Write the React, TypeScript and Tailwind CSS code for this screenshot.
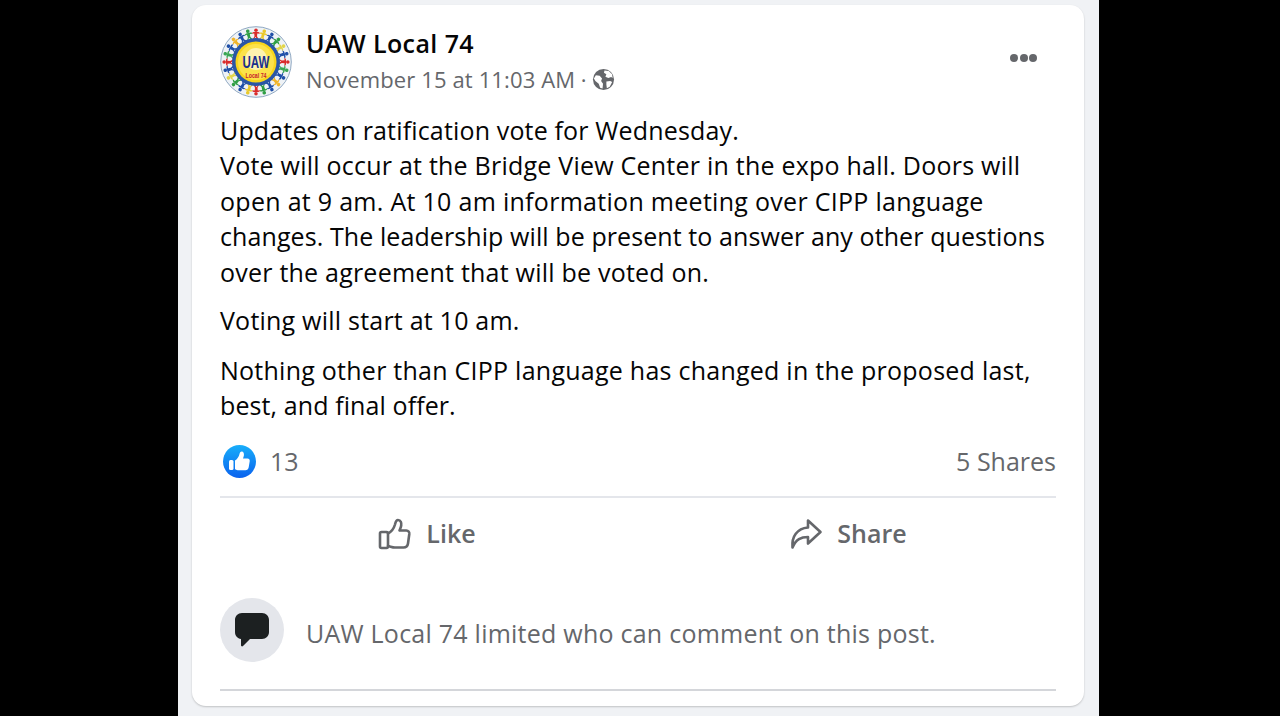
const FONT = "font-['Open_Sans','Noto_Sans',sans-serif]";

function Logo() {
  const colors = ['#d92b2b', '#e9c92a', '#1f4fa8', '#2f9e44', '#e2d54a', '#1f4fa8', '#d92b2b', '#3aa655', '#1f4fa8', '#f0b429', '#1f4fa8', '#2f9e44'];
  const figures = Array.from({ length: 24 }, (_, i) => (i * 360) / 24);
  return (
    <svg viewBox="0 0 72 72" className="w-[72px] h-[72px] shrink-0">
      <circle cx="36" cy="36" r="35.300" fill="#eef2f6" stroke="#8fa8c2" strokeWidth="1" />
      {figures.map((a, i) => (
        <g key={a} transform={`rotate(${a} 36 36)`} fill={colors[i % colors.length]}>
          <circle cx="36" cy="4.200" r="1.800" />
          <path d="M32.500 6.500 33.800 6h4.400l1.300.5.2 1.200-2.400-.3-.3 2.800 1.500 2.800h-1.700l-1.300-2.200-1.300 2.200H33l1.500-2.800-.3-2.800-2.400.3z" />
        </g>
      ))}
      <circle cx="36" cy="36" r="24" fill="#2a56a6" />
      <circle cx="36" cy="36" r="20.500" fill="#f7d51d" />
      <circle cx="36" cy="36" r="18" fill="#fbe24a" />
      <circle cx="36" cy="33" r="11" fill="#fdf3b0" />
      <text x="36" y="42" textAnchor="middle" fontFamily="'Liberation Sans',sans-serif" fontWeight="700" fontSize="17" textLength="27" lengthAdjust="spacingAndGlyphs" fill="#1a2f8c">UAW</text>
      <text x="36" y="51.500" textAnchor="middle" fontFamily="'Liberation Sans',sans-serif" fontWeight="700" fontSize="6.500" textLength="21" lengthAdjust="spacingAndGlyphs" fill="#c9242b">Local 74</text>
    </svg>
  );
}

function Globe() {
  return (
    <svg viewBox="0 0 24 24" className="w-[23px] h-[23px]">
      <circle cx="12" cy="12" r="11" fill="#65676b" />
      <path d="M4 7.500l4 .5 2.500 3-1 2.500 2 3-.5 5-2.500-1-1.500-4-3.500-3-1.500-2.500zM13 2.500l-.5 2.500 2.500 1.500-1 2.500 3 1.500 3-1 1.500 1-.5-4-3.500-3.500zM15 14l4-.5 2 1-2.500 5-3 1.500-.5-3.500z" fill="#fff" />
    </svg>
  );
}

function LikeOutline() {
  return (
    <svg viewBox="0 0 34 34" className="w-[34px] h-[34px]" fill="none" stroke="#65676b" strokeWidth="2.600" strokeLinejoin="round" strokeLinecap="round">
      <rect x="2" y="15" width="8" height="16" rx="1.500" />
      <path d="M10 16.500c3-1.500 6-5.500 7-9 .5-2 .8-4.500 3-4.500 2.800 0 3.600 3 3.200 5.500-.3 2-1.200 3.500-1.700 5h6.800c2 0 3.200 1.600 3 3.500l-1.300 9.500c-.4 2.700-2 4-4.500 4h-8.500c-2.500 0-4-.8-7-1.500" />
    </svg>
  );
}

function ShareOutline() {
  return (
    <svg viewBox="0 0 34 34" className="w-[34px] h-[34px]" fill="none" stroke="#65676b" strokeWidth="2.600" strokeLinejoin="round" strokeLinecap="round">
      <path d="M19 3.500 31.500 15 19 26.500v-6.500c-7 0-12 2-15.500 10.500C2.500 19.500 8 11.500 19 10.500z" />
    </svg>
  );
}

function ThumbBadge() {
  return (
    <svg viewBox="0 0 33 33" className="w-[33px] h-[33px]">
      <defs>
        <linearGradient id="fbBlue" x1="0" y1="0" x2="0" y2="1">
          <stop offset="0" stopColor="#18aefa" />
          <stop offset="1" stopColor="#0a62ee" />
        </linearGradient>
      </defs>
      <circle cx="16.500" cy="16.500" r="16.500" fill="url(#fbBlue)" />
      <rect x="6" y="15" width="4.500" height="10" rx="1.500" fill="#fff" />
      <path d="M12 15.500c2-1 4-4 4.500-6.500.3-1.500 1-2.500 2.200-2.500 1.800 0 2.500 2 2.200 4-.2 1-.6 2-.9 3h4.500c1.500 0 2.500 1.200 2.200 2.700l-1 6c-.3 1.800-1.500 3-3.300 3h-6.400c-1.800 0-3-.5-4-1z" fill="#fff" />
    </svg>
  );
}

export default function App() {
  return (
    <div className={`h-[716px] w-[1280px] overflow-hidden bg-black flex ${FONT}`}>
      <div className="ml-[178px] w-[921px] h-full bg-[#f0f2f5] px-[14px] pt-[5px]">
        <div className="w-[892px] h-[701px] bg-white rounded-[14px] shadow-[0_1px_2px_rgba(0,0,0,0.2)] px-[28px] pt-[21px]">
          <div className="flex h-[72px]">
            <Logo />
            <div className="ml-[14px] flex flex-col">
              <div className="text-[25px] leading-[36px] font-semibold text-[#050505] -mt-[1px] tracking-[0.42px]">UAW Local 74</div>
              <div className="flex items-center text-[22px] leading-[36px] text-[#65676b]">
                <span className="tracking-[0.13px]">November 15 at 11:03 AM</span>
                <span className="ml-[5.500px] mr-[5.500px]">·</span>
                <Globe />
              </div>
            </div>
            <div className="ml-auto mr-[19px] mt-[28px] flex gap-[1.500px] h-[8px]">
              <span className="w-[8px] h-[8px] rounded-full bg-[#65676b]" />
              <span className="w-[8px] h-[8px] rounded-full bg-[#65676b]" />
              <span className="w-[8px] h-[8px] rounded-full bg-[#65676b]" />
            </div>
          </div>

          <div className="mt-[14.500px] text-[25px] leading-[35.500px] text-[#050505]">
            <p className="tracking-[0.16px]">Updates on ratification vote for Wednesday.</p>
            <p className="tracking-[0.23px]">Vote will occur at the Bridge View Center in the expo hall. Doors will</p>
            <p className="tracking-[0.29px]">open at 9 am. At 10 am information meeting over CIPP language</p>
            <p className="tracking-[0.09px]">changes. The leadership will be present to answer any other questions</p>
            <p className="tracking-[0.22px]">over the agreement that will be voted on.</p>
            <p className="mt-[13px] tracking-[0.22px]">Voting will start at 10 am.</p>
            <p className="mt-[14px] tracking-[0.25px]">Nothing other than CIPP language has changed in the proposed last,</p>
            <p className="tracking-[0.1px]">best, and final offer.</p>
          </div>

          <div className="mt-[20.500px] h-[34px] flex items-center justify-between text-[25px] text-[#65676b]">
            <div className="flex items-center">
              <span className="ml-[3px]"><ThumbBadge /></span>
              <span className="ml-[14px] mt-[1px]">13</span>
            </div>
            <span className="mt-[1px]">5 Shares</span>
          </div>

          <div className="mt-[18px] h-[2px] bg-[#e4e6eb]" />

          <div className="mt-[18px] flex h-[36px]">
            <div className="w-[411px] flex items-center justify-center gap-[14px] text-[#65676b] text-[25px] font-semibold pl-[3px]">
              <LikeOutline />
              <span>Like</span>
            </div>
            <div className="flex-1 flex items-center justify-center gap-[14px] text-[#65676b] text-[25px] font-semibold pl-[9px]">
              <ShareOutline />
              <span>Share</span>
            </div>
          </div>

          <div className="mt-[46px] flex items-center h-[64px]">
            <div className="w-[64px] h-[64px] rounded-full bg-[#e4e6eb] flex items-center justify-center">
              <svg viewBox="0 0 36 36" className="w-[36px] h-[36px]">
                <path d="M8 1h20c4 0 7 3 7 7v12c0 4-3 7-7 7H16l-7 7c-.8.8-2 .3-2-.8V27c-3.500-.5-6-3-6-7V8c0-4 3-7 7-7z" fill="#1c2021" />
              </svg>
            </div>
            <span className="ml-[22px] text-[25px] text-[#65676b] tracking-[0.24px] mt-[8px]">UAW Local 74 limited who can comment on this post.</span>
          </div>

          <div className="mt-[27px] h-[1.500px] bg-[#d4d6da]" />
        </div>
      </div>
    </div>
  );
}
